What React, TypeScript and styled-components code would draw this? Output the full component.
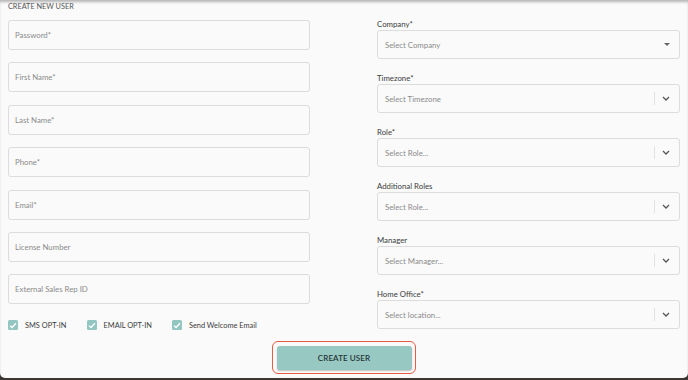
import styled, { createGlobalStyle } from 'styled-components';

const GlobalStyle = createGlobalStyle`
  html, body {
    margin: 0;
    padding: 0;
    background: #3b3631;
  }
  * {
    box-sizing: border-box;
  }
`;

const Panel = styled.div`
  width: 688px;
  height: 378px;
  background: #fafafa;
  border-radius: 0 0 5px 5px;
  box-shadow: inset 0 3px 3px -1px rgba(0, 0, 0, 0.28);
  padding: 1px 8px 0;
  font-family: Lato, 'Liberation Sans', sans-serif;
  display: flex;
  flex-direction: column;
`;

const Title = styled.div`
  font-size: 7.3px;
  line-height: 11px;
  color: #555;
  text-transform: uppercase;
`;

const Columns = styled.div`
  display: grid;
  grid-template-columns: 302px 303px;
  justify-content: space-between;
  margin-top: 8px;
`;

const LeftCol = styled.div`
  display: flex;
  flex-direction: column;
  gap: 12.4px;
`;

const RightCol = styled.div`
  display: flex;
  flex-direction: column;
  gap: 14px;
  margin-top: -1px;
`;

const TextInput = styled.div`
  height: 30px;
  border: 1px solid #dcdcdc;
  border-radius: 3px;
  background: #fafafa;
  display: flex;
  align-items: center;
  padding-left: 6px;
  font-size: 7.8px;
  color: #8b8b8b;
`;

const Field = styled.div`
  display: flex;
  flex-direction: column;
`;

const Label = styled.div`
  font-size: 7.8px;
  line-height: 11px;
  color: #3c3c3c;
  margin-bottom: 0;
`;

const Select = styled.div`
  height: 29px;
  border: 1px solid #dcdcdc;
  border-radius: 3px;
  background: #fafafa;
  display: flex;
  align-items: center;
  padding: 0 9px 0 7px;
  font-size: 7.8px;
  color: #8b8b8b;
`;

const SelectText = styled.span`
  flex: 1;
`;

const Separator = styled.span`
  width: 1px;
  height: 13px;
  background: #e2e2e2;
  margin-right: 7px;
`;

const Caret = styled.span`
  width: 0;
  height: 0;
  border-left: 3px solid transparent;
  border-right: 3px solid transparent;
  border-top: 3px solid #666;
  margin-right: 0;
`;

const Checks = styled.div`
  display: flex;
  gap: 20px;
  margin-top: 16px;
`;

const CheckItem = styled.label`
  display: flex;
  align-items: center;
  gap: 7px;
  font-size: 7.4px;
  color: #3c3c3c;
`;

const Box = styled.span`
  width: 10px;
  height: 10px;
  border-radius: 1.5px;
  background: #93c6c0;
  display: flex;
  align-items: center;
  justify-content: center;
`;

const ButtonRow = styled.div`
  display: flex;
  justify-content: center;
  margin-top: 11px;
`;

const Highlight = styled.div`
  border: 1.5px solid #e85b43;
  border-radius: 6px;
  padding: 3.5px;
`;

const CreateButton = styled.button`
  width: 135px;
  height: 24px;
  border: none;
  border-radius: 3px;
  background: #97c8c2;
  box-shadow: 0 1px 1.5px rgba(0, 0, 0, 0.25);
  font-family: Lato, 'Liberation Sans', sans-serif;
  font-size: 8px;
  font-weight: 600;
  color: #263636;
  letter-spacing: 0.1px;
  display: block;
`;

const Chevron = () => (
  <svg width="8" height="5" viewBox="0 0 8 5">
    <path d="M1 1 L4 4 L7 1" fill="none" stroke="#555" strokeWidth="1.3" />
  </svg>
);

const Check = () => (
  <svg width="8" height="7" viewBox="0 0 8 7">
    <path d="M1 3.6 L3 5.5 L7 1.2" fill="none" stroke="#fff" strokeWidth="1.3" />
  </svg>
);

const leftFields = [
  'Password*',
  'First Name*',
  'Last Name*',
  'Phone*',
  'Email*',
  'License Number',
  'External Sales Rep ID',
];

const rightFields = [
  { label: 'Timezone*', placeholder: 'Select Timezone' },
  { label: 'Role*', placeholder: 'Select Role...' },
  { label: 'Additional Roles', placeholder: 'Select Role...' },
  { label: 'Manager', placeholder: 'Select Manager...' },
  { label: 'Home Office*', placeholder: 'Select location...' },
];

const checks = ['SMS OPT-IN', 'EMAIL OPT-IN', 'Send Welcome Email'];

export default function App() {
  return (
    <>
      <GlobalStyle />
      <Panel>
        <Title>Create New User</Title>
        <Columns>
          <div>
            <LeftCol>
              {leftFields.map((f) => (
                <TextInput key={f}>{f}</TextInput>
              ))}
            </LeftCol>
            <Checks>
              {checks.map((c) => (
                <CheckItem key={c}>
                  <Box>
                    <Check />
                  </Box>
                  {c}
                </CheckItem>
              ))}
            </Checks>
          </div>
          <RightCol>
            <Field>
              <Label>Company*</Label>
              <Select>
                <SelectText>Select Company</SelectText>
                <Caret />
              </Select>
            </Field>
            {rightFields.map((f) => (
              <Field key={f.label}>
                <Label>{f.label}</Label>
                <Select>
                  <SelectText>{f.placeholder}</SelectText>
                  <Separator />
                  <Chevron />
                </Select>
              </Field>
            ))}
          </RightCol>
        </Columns>
        <ButtonRow>
          <Highlight>
            <CreateButton>CREATE USER</CreateButton>
          </Highlight>
        </ButtonRow>
      </Panel>
    </>
  );
}
